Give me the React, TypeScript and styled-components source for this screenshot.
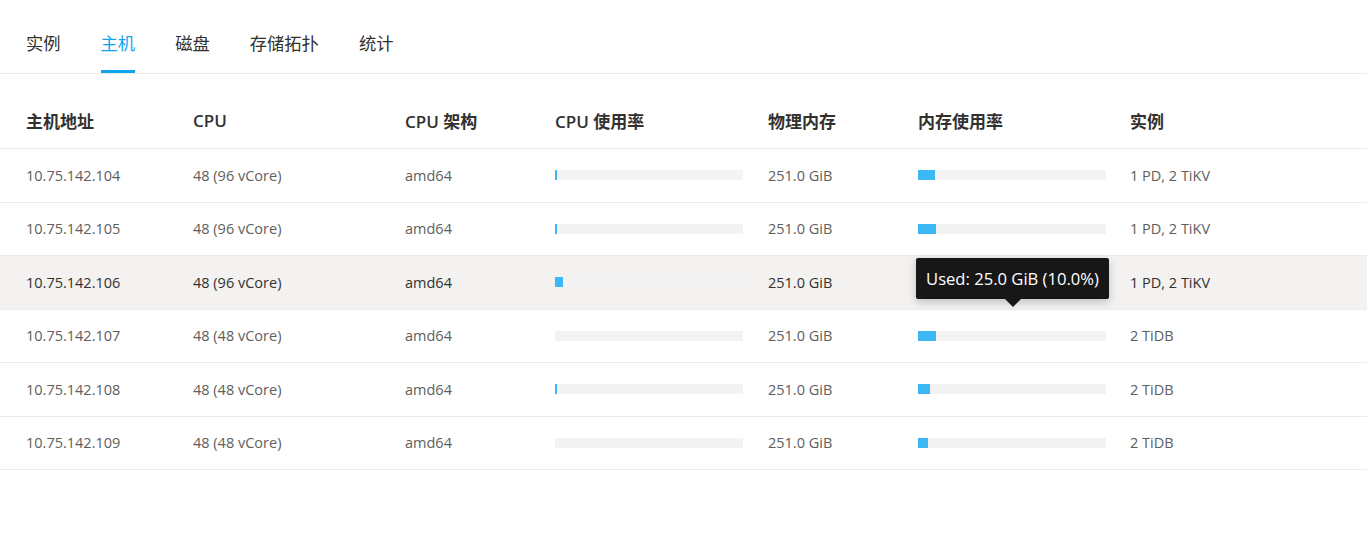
import React, { FC } from 'react'
import styled, { createGlobalStyle } from 'styled-components'

const GlobalStyle = createGlobalStyle`
    body {
        margin: 0;
        background: #ffffff;
        font-family: "Open Sans", "Noto Sans CJK SC", sans-serif;
    }
`

const Page = styled.div`
    width: 1367px;
    height: 541px;
    background: #ffffff;
    overflow: hidden;
`

const TabBar = styled.nav`
    display: flex;
    gap: 40px;
    padding-left: 26px;
    height: 73px;
    border-bottom: 1px solid #edebe9;
`

const Tab = styled.div<{ active?: boolean }>`
    position: relative;
    display: flex;
    align-items: center;
    font-size: 17.3px;
    color: ${props => props.active ? '#0ea5ec' : '#323130'};
    padding-top: 12px;

    &::after {
        content: '';
        position: absolute;
        left: 0;
        right: 0;
        bottom: 0;
        height: 3px;
        background: ${props => props.active ? '#0ea5ec' : 'transparent'};
    }
`

const columns = '167px 212px 150px 213px 150px 212px 1fr'

const HeaderRow = styled.div`
    display: grid;
    grid-template-columns: ${columns};
    padding-left: 26px;
    height: 75px;
    align-items: center;
    padding-top: 18px;
    box-sizing: border-box;
    border-bottom: 1px solid #edebe9;
    font-size: 17px;
    font-weight: 600;
    color: #323130;
`

const Row = styled.div<{ hovered?: boolean }>`
    display: grid;
    grid-template-columns: ${columns};
    padding-left: 26px;
    height: 53.5px;
    box-sizing: border-box;
    align-items: center;
    border-bottom: 1px solid #edebe9;
    background: ${props => props.hovered ? '#f3f2f1' : '#ffffff'};
    color: ${props => props.hovered ? '#323130' : '#605e5c'};
    font-size: 14.5px;
`

const Cell = styled.div`
    position: relative;
    white-space: nowrap;
`

const Track = styled.div`
    width: 188px;
    height: 10px;
    background: #f3f3f3;
`

const Fill = styled.div`
    height: 100%;
    background: #3cb9f5;
`

const Tooltip = styled.div`
    position: absolute;
    left: -2px;
    top: -19px;
    width: 193px;
    height: 41px;
    box-sizing: border-box;
    display: flex;
    align-items: center;
    justify-content: center;
    background: #171717;
    color: #ffffff;
    font-size: 16.6px;
    border-radius: 2px;
    box-shadow: 0 3px 10px rgba(0, 0, 0, 0.22);
    z-index: 2;

    &::after {
        content: '';
        position: absolute;
        left: 50%;
        bottom: -8px;
        margin-left: -8px;
        border-left: 8px solid transparent;
        border-right: 8px solid transparent;
        border-top: 8px solid #171717;
    }
`

type Host = {
    ip: string
    cpu: string
    cpuPx: number
    memPx: number
    instances: string
}

const hosts: Host[] = [
    { ip: '10.75.142.104', cpu: '48 (96 vCore)', cpuPx: 2, memPx: 17, instances: '1 PD, 2 TiKV' },
    { ip: '10.75.142.105', cpu: '48 (96 vCore)', cpuPx: 2, memPx: 18, instances: '1 PD, 2 TiKV' },
    { ip: '10.75.142.106', cpu: '48 (96 vCore)', cpuPx: 8, memPx: 18, instances: '1 PD, 2 TiKV' },
    { ip: '10.75.142.107', cpu: '48 (48 vCore)', cpuPx: 0, memPx: 18, instances: '2 TiDB' },
    { ip: '10.75.142.108', cpu: '48 (48 vCore)', cpuPx: 2, memPx: 12, instances: '2 TiDB' },
    { ip: '10.75.142.109', cpu: '48 (48 vCore)', cpuPx: 0, memPx: 10, instances: '2 TiDB' },
]

const tabs = ['实例', '主机', '磁盘', '存储拓扑', '统计']

const App: FC = () => {
    return (
        <Page>
            <GlobalStyle />
            <TabBar>
                {tabs.map(t => (
                    <Tab key={t} active={t === '主机'}>{t}</Tab>
                ))}
            </TabBar>
            <HeaderRow>
                <div>主机地址</div>
                <div>CPU</div>
                <div>CPU 架构</div>
                <div>CPU 使用率</div>
                <div>物理内存</div>
                <div>内存使用率</div>
                <div>实例</div>
            </HeaderRow>
            {hosts.map((h, i) => (
                <Row key={h.ip} hovered={i === 2}>
                    <Cell>{h.ip}</Cell>
                    <Cell>{h.cpu}</Cell>
                    <Cell>amd64</Cell>
                    <Cell>
                        <Track><Fill style={{ width: h.cpuPx }} /></Track>
                    </Cell>
                    <Cell>251.0 GiB</Cell>
                    <Cell>
                        <Track><Fill style={{ width: h.memPx }} /></Track>
                        {i === 2 && <Tooltip>Used: 25.0 GiB (10.0%)</Tooltip>}
                    </Cell>
                    <Cell>{h.instances}</Cell>
                </Row>
            ))}
        </Page>
    )
}

export default App
